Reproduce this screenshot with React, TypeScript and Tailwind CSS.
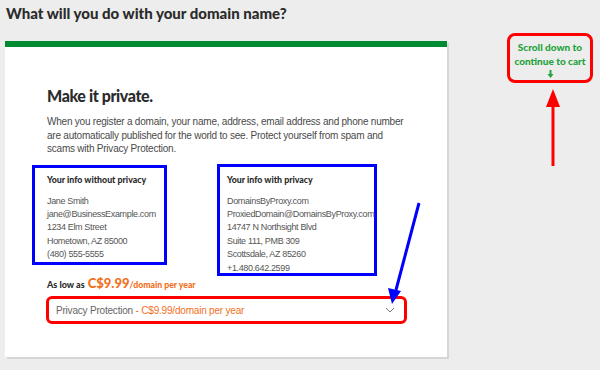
import React from "react";

export default function App() {
  const arial = { fontFamily: '"Liberation Sans", Arial, sans-serif' } as React.CSSProperties;
  return (
    <div className="relative w-[600px] h-[370px] overflow-hidden bg-[#ededed]">
      <h1 className="pl-[6px] pt-[3px] text-[15px] leading-[20px] font-black text-[#2b2b2b] font-['Lato',sans-serif]">
        What will you do with your domain name?
      </h1>
      <div className="flex items-start mt-[18px]">
        <div className="ml-[5px] w-[442px] h-[316px] bg-white border-t-[6px] border-[#008a32] shadow-[2px_2px_0_#d6d6d6]">
          <div className="pl-[42px] pt-[39px]">
            <h2 className="text-[16px] leading-[20px] font-black tracking-[-0.4px] text-[#2b2b2b] font-['Lato',sans-serif]">Make it private.</h2>
            <p style={arial} className="mt-[9px] text-[10px] leading-[13.5px] tracking-[-0.22px] text-[#4a4a4a] w-[362px]">
              When you register a domain, your name, address, email address and phone number are automatically published for the world to see. Protect yourself from spam and scams with Privacy Protection.
            </p>
          </div>
          <div className="flex items-start ml-[27px] mt-[8px]">
            <div className="mt-[1px] w-[135px] h-[100px] border-[3px] border-[#0000ff] pl-[12px] pt-[6px]">
              <div className="text-[8.8px] leading-[12px] font-black text-[#2b2b2b] font-['Lato',sans-serif]">Your info without privacy</div>
              <div style={arial} className="mt-[9px] text-[9px] leading-[13.4px] tracking-[-0.35px] text-[#555]">
                <div>Jane Smith</div>
                <div>jane@BusinessExample.com</div>
                <div>1234 Elm Street</div>
                <div>Hometown, AZ 85000</div>
                <div>(480) 555-5555</div>
              </div>
            </div>
            <div className="ml-[50px] w-[160px] h-[112px] border-[3px] border-[#0000ff] pl-[7px] pt-[7px]">
              <div className="text-[8.8px] leading-[12px] font-black text-[#2b2b2b] font-['Lato',sans-serif]">Your info with privacy</div>
              <div style={arial} className="mt-[9px] text-[9px] leading-[13.4px] tracking-[-0.35px] text-[#555]">
                <div>DomainsByProxy.com</div>
                <div>ProxiedDomain@DomainsByProxy.com</div>
                <div>14747 N Northsight Blvd</div>
                <div>Suite 111, PMB 309</div>
                <div>Scottsdale, AZ 85260</div>
                <div>+1.480.642.2599</div>
              </div>
            </div>
          </div>
          <div className="pl-[42px] mt-[-2px] flex items-baseline font-['Lato',sans-serif] font-black">
            <span className="text-[9px] text-[#2b2b2b]">As low as</span>
            <span className="ml-[3px] text-[13px] text-[#f26f21]">C$9.99</span>
            <span className="text-[8.7px] text-[#f26f21]">/domain per year</span>
          </div>
          <div className="ml-[41px] mt-[3px] w-[361px] h-[28px] border-[3px] border-[#ff0000] rounded-[6px] flex items-center pl-[7px] pr-[9px]">
            <span style={arial} className="text-[10px] tracking-[-0.2px] text-[#666]">Privacy Protection <span className="text-[#f26f21]">- C$9.99/domain per year</span></span>
            <svg className="ml-auto" width="10" height="6" viewBox="0 0 10 6">
              <path d="M1 1 L5 5 L9 1" fill="none" stroke="#777" strokeWidth="1" />
            </svg>
          </div>
        </div>
        <div className="ml-[60px] mt-[-8px] w-[86px] h-[50px] border-[3px] border-[#ff0000] rounded-[8px] flex flex-col items-center pt-[4px] font-['Lato',sans-serif] font-black text-[#1fa33a] text-[10px] leading-[14px]">
          <span>Scroll down to</span>
          <span>continue to cart</span>
          <svg className="mt-[2px]" width="7" height="8" viewBox="0 0 7 8">
            <path d="M3.5 0 V5" stroke="#1fa33a" strokeWidth="2" />
            <path d="M0.5 4 L3.5 8 L6.5 4 Z" fill="#1fa33a" />
          </svg>
        </div>
      </div>
      <svg className="absolute left-0 top-0 pointer-events-none" width="600" height="370" viewBox="0 0 600 370">
        <line x1="553" y1="166" x2="553" y2="104" stroke="#ff0000" strokeWidth="3" />
        <path d="M553 89 L560 107 L546 107 Z" fill="#ff0000" />
        <line x1="419" y1="203" x2="396" y2="290" stroke="#0000ff" strokeWidth="3" />
        <path d="M392 304 L388 288 L401 291 Z" fill="#0000ff" />
      </svg>
    </div>
  );
}
